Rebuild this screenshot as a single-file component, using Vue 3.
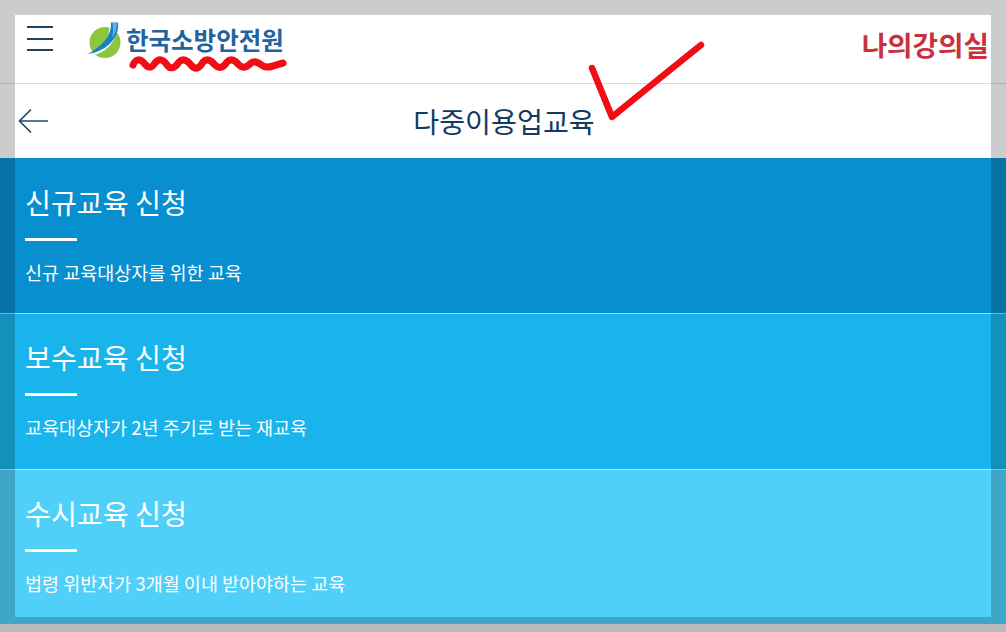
<template>
  <div class="page">
    <header class="top-bar">
      <div class="brand">
        <button class="menu-btn" aria-label="메뉴">
          <span></span>
          <span></span>
          <span></span>
        </button>
        <a class="logo">
          <svg class="logo-mark" width="36" height="36" viewBox="0 0 36 36">
            <circle cx="18" cy="20.5" r="15.5" fill="#8cc63f" />
            <path d="M22 3 C24 12 17 24 5 33 C18 32 29 20 30 6 Z" fill="#fff" />
            <path d="M24 0.5 L31 0.5 C33 13 22 29 1 32 C12 26 25 15 24 0.5 Z" fill="#1b7fc4" />
            <path d="M25.5 1 L30 1 C30 7 28 12 25 16 C26 11 26.500 6 25.500 1 Z" fill="#5bb4e6" />
          </svg>
          <span class="logo-text">한국소방안전원</span>
        </a>
      </div>
      <a class="my-class">나의강의실</a>
    </header>

    <div class="title-bar">
      <svg class="back" width="32" height="28" viewBox="0 0 32 28">
        <path d="M31 14 H3 M14 2.5 L2.500 14 L14 25.5" fill="none" stroke="#27496d" stroke-width="1.7" />
      </svg>
      <h1>다중이용업교육</h1>
    </div>

    <section v-for="item in courses" :key="item.title" class="course" :class="item.tone">
      <h2>{{ item.title }}</h2>
      <div class="rule"></div>
      <p>{{ item.desc }}</p>
    </section>

    <!-- 빨간 펜 표시 -->
    <svg class="marks" width="1006" height="632" viewBox="0 0 1006 632">
      <path
        d="M133 65 C136 58 140 59 144 63 C148 68 151 69 155 63 C159 58 163 59 167 65 C171 70 175 68 179 62 C183 58 187 60 191 65 C195 70 199 69 203 62 C207 58 211 60 215 65 C219 69 223 68 227 62 C231 58 235 60 239 65 C243 69 247 67 251 63 C255 60 259 63 263 66 C268 69 275 65 283 63"
        fill="none" stroke="#f20d15" stroke-width="7" stroke-linecap="round" stroke-linejoin="round" />
      <path d="M592 68 L612 117 Q650 86 701 45" fill="none" stroke="#f20d15" stroke-width="6.5"
        stroke-linecap="round" stroke-linejoin="round" />
    </svg>

    <div class="frame"></div>
  </div>
</template>

<script setup>
const courses = [
  { title: '신규교육 신청', desc: '신규 교육대상자를 위한 교육', tone: 'dark' },
  { title: '보수교육 신청', desc: '교육대상자가 2년 주기로 받는 재교육', tone: 'mid' },
  { title: '수시교육 신청', desc: '법령 위반자가 3개월 이내 받아야하는 교육', tone: 'light' },
]
</script>

<style>
html,
body {
  margin: 0;
  background: #e6e6e6;
}
</style>

<style scoped>
.page {
  position: relative;
  width: 1006px;
  height: 632px;
  overflow: hidden;
  background: #e8e8e8;
  font-family: "Noto Sans CJK KR", "Noto Sans", sans-serif;
}

.top-bar {
  box-sizing: border-box;
  height: 84px;
  padding: 15px 17px 0 27px;
  display: flex;
  justify-content: space-between;
  background: #fff;
  border-bottom: 1px solid #dcdcdc;
}

.brand {
  display: flex;
  align-items: flex-start;
}

.menu-btn {
  width: 26px;
  margin: 11px 0 0;
  padding: 0;
  border: none;
  background: none;
  display: flex;
  flex-direction: column;
  gap: 9.5px;
}

.menu-btn span {
  display: block;
  height: 2px;
  background: #1d4468;
}

.logo {
  margin: 7px 0 0 34px;
  display: flex;
  align-items: center;
  gap: 3px;
}

.logo-text {
  font-size: 24.5px;
  line-height: 36px;
  font-weight: 700;
  color: #22639f;
}

.my-class {
  margin-top: 9px;
  font-size: 27.7px;
  line-height: 40px;
  font-weight: 700;
  color: #c8323f;
}

.title-bar {
  height: 74px;
  display: flex;
  align-items: center;
  justify-content: center;
  position: relative;
  background: #fff;
}

.back {
  position: absolute;
  left: 17px;
  top: 23px;
}

.title-bar h1 {
  margin: 0 0 0 2px;
  font-size: 28.2px;
  font-weight: 400;
  line-height: 40px;
  color: #123a63;
}

.course {
  box-sizing: border-box;
  height: 156px;
  padding: 23px 25px 0;
  color: #fff;
  border-top: 1px solid rgba(255, 255, 255, 0.55);
}

.course.dark {
  height: 155px;
  padding-top: 24px;
  border-top: none;
  background: #088fd0;
}

.course.mid {
  background: #19b4ec;
}

.course.light {
  height: 155px;
  background: #50d0f8;
}

.course h2 {
  margin: 0;
  font-size: 28.2px;
  line-height: 40px;
  font-weight: 400;
}

.rule {
  width: 52px;
  height: 3px;
  margin-top: 16px;
  background: #fff;
}

.course p {
  margin: 17px 0 0;
  font-size: 18.5px;
  line-height: 28px;
}

.marks {
  position: absolute;
  left: 0;
  top: 0;
  pointer-events: none;
}

.frame {
  position: absolute;
  inset: 0;
  box-sizing: border-box;
  border: 15px solid rgba(0, 0, 0, 0.2);
  pointer-events: none;
}
</style>
